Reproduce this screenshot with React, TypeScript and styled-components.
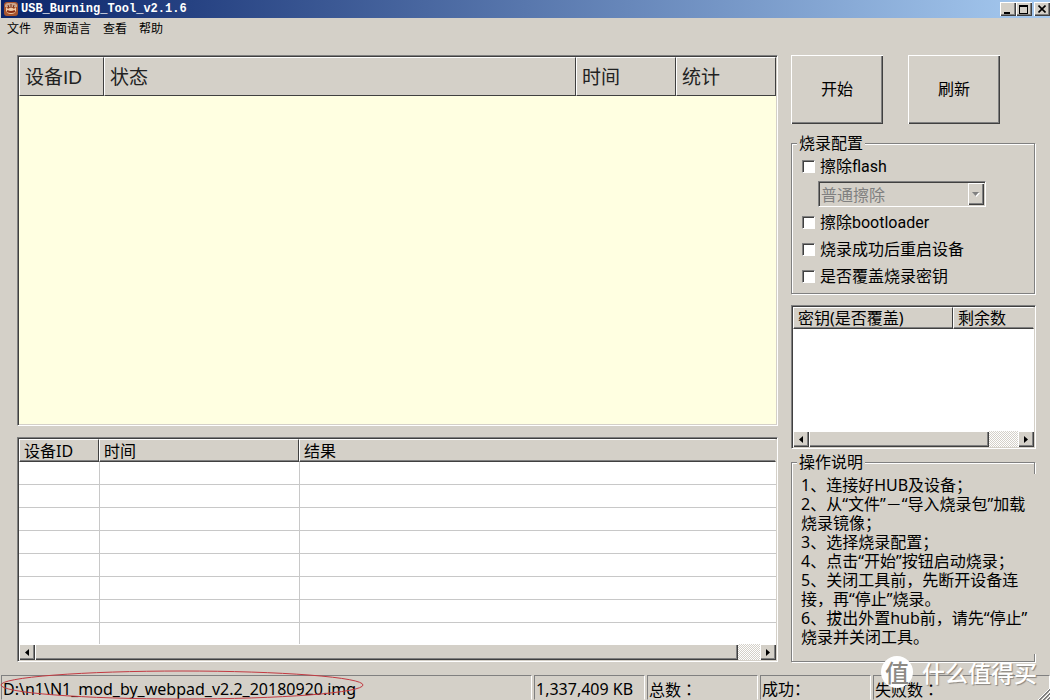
import React from "react";
import styled, { createGlobalStyle } from "styled-components";

const face = "#d4d0c8";
const shade = "#808080";
const dark = "#404040";
const raised = `inset 1px 1px 0 #fff, inset -1px -1px 0 ${dark}, inset -2px -2px 0 ${shade}`;
const uiFont = `"Noto Sans", "Noto Sans CJK SC", sans-serif`;

const GlobalStyle = createGlobalStyle`
  *, *::before, *::after { box-sizing: border-box; }
  body { margin: 0; background: ${face}; }
  button, select, input { font: inherit; color: inherit; margin: 0; }
`;

const Window = styled.div`
  position: relative;
  display: flex;
  flex-direction: column;
  min-height: 100vh;
  overflow: hidden;
  background: ${face};
  color: #000;
  font: 16px/19px ${uiFont};
`;

const TitleBar = styled.header`
  display: flex;
  align-items: center;
  height: 18px;
  margin-left: 1px;
  padding-left: 3px;
  background: linear-gradient(to right, #0a246a, #a6caf0);
`;

const Title = styled.h1`
  flex: 1;
  margin: 0 0 0 3px;
  color: #fff;
  font: bold 12px/18px "Liberation Mono", monospace;
`;

const CaptionButtons = styled.div`
  display: flex;
`;

const CaptionButton = styled.button<{ $apart?: boolean }>`
  display: grid;
  place-items: center;
  width: 16px;
  height: 14px;
  margin-left: ${(p) => (p.$apart ? 2 : 0)}px;
  padding: 0;
  border: 0;
  background: ${face};
  box-shadow: ${raised};
`;

const MenuBar = styled.nav`
  display: flex;
  height: 20px;
  padding-left: 1px;
`;

const MenuItem = styled.button`
  padding: 0 6px;
  border: 0;
  background: none;
  font: 12px/20px "Noto Sans CJK SC", sans-serif;
`;

const Main = styled.main`
  flex: 1;
  display: grid;
  grid-template-columns: minmax(0, 1fr) 245px;
  gap: 13px;
  padding: 17px 14px 11px 17px;
`;

const Column = styled.div`
  display: flex;
  flex-direction: column;
  min-width: 0;
`;

const ListBox = styled.section<{ $fill?: boolean; $top?: number }>`
  display: flex;
  flex-direction: column;
  flex: ${(p) => (p.$fill ? "1 0 auto" : "none")};
  margin-top: ${(p) => p.$top ?? 0}px;
  padding: 1px;
  border: 1px solid;
  border-color: ${shade} #fff #fff ${shade};
  box-shadow: inset 1px 1px 0 ${dark};
  background: ${face};
`;

const ListView = styled.div<{ $tone: string; $height?: number }>`
  flex: ${(p) => (p.$height ? `0 0 ${p.$height}px` : "1 0 240px")};
  overflow: hidden;
  background: ${(p) => p.$tone};
`;

const Table = styled.table`
  width: 100%;
  table-layout: fixed;
  border-collapse: separate;
  border-spacing: 0;
`;

const Col = styled.col<{ $w?: number }>`
  width: ${(p) => (p.$w ? `${p.$w}px` : "auto")};
`;

const HeadCell = styled.th<{ $large?: boolean; $open?: boolean; $short?: boolean }>`
  height: ${(p) => (p.$large ? 39 : p.$short ? 22 : 23)}px;
  padding: ${(p) => (p.$large ? "2px 0 0 5px" : "0 0 0 4px")};
  border: 1px solid;
  border-color: #fff ${(p) => (p.$open ? face : dark)} ${dark} #fff;
  background: ${face};
  box-shadow: ${(p) => (p.$large ? "none" : `inset 0 -1px 0 ${shade}`)};
  text-align: left;
  white-space: nowrap;
  font: ${(p) =>
    p.$large ? `19px/30px "Liberation Sans", "Noto Sans CJK SC", sans-serif` : `16px/20px ${uiFont}`};
  color: ${(p) => (p.$large ? "#222" : "#000")};
`;

const Cell = styled.td`
  height: 23px;
  padding: 0;
  border-bottom: 1px solid #c8c8c8;
  & + & {
    border-left: 1px solid #c8c8c8;
  }
`;

const ScrollBar = styled.div`
  display: flex;
  height: 16px;
  background: repeating-conic-gradient(#fff 0 25%, ${face} 0 50%) 0 0 / 2px 2px;
`;

const ScrollButton = styled.button`
  display: grid;
  place-items: center;
  width: 16px;
  height: 16px;
  padding: 0;
  border: 0;
  background: ${face};
  box-shadow: ${raised};
`;

const Thumb = styled.div<{ $share: number }>`
  flex: ${(p) => p.$share} 0 0;
  background: ${face};
  box-shadow: ${raised};
`;

const TrackRest = styled.div<{ $share: number }>`
  flex: ${(p) => p.$share} 0 0;
`;

const Actions = styled.div`
  display: flex;
  gap: 25px;
`;

const ActionButton = styled.button`
  width: 92px;
  height: 69px;
  padding: 0;
  border: 0;
  background: ${face};
  box-shadow: ${raised};
`;

const Group = styled.fieldset<{ $top: number; $fill?: boolean }>`
  flex: ${(p) => (p.$fill ? "1 0 auto" : "none")};
  min-width: 0;
  margin: ${(p) => p.$top}px 1px 0 0;
  padding: 0 0 3px 9px;
  border: 1px solid ${shade};
  box-shadow: 1px 1px 0 #fff, inset 1px 1px 0 #fff;
`;

const Legend = styled.legend`
  margin-left: -4px;
  padding: 0 2px;
  background: ${face};
  line-height: 18px;
`;

const Options = styled.div`
  padding-top: 1px;
`;

const Option = styled.label`
  display: flex;
  align-items: center;
  gap: 5px;
  height: 27px;
  padding-left: 1px;
  font-family: Roboto, "Noto Sans CJK SC", sans-serif;
`;

const Tick = styled.input`
  appearance: none;
  width: 13px;
  height: 13px;
  border: 1px solid;
  border-color: ${shade} #fff #fff ${shade};
  background: #fff;
  box-shadow: inset 1px 1px 0 ${dark};
  &:checked {
    background: ${dark};
  }
`;

const Drop = styled.div`
  position: relative;
  width: 168px;
  height: 26px;
  margin: 1px 0 2px 17px;
`;

const Select = styled.select`
  appearance: none;
  width: 100%;
  height: 100%;
  padding: 2px 18px 0 2px;
  border: 1px solid;
  border-color: ${shade} #fff #fff ${shade};
  border-radius: 0;
  background: ${face};
  box-shadow: inset 1px 1px 0 ${dark};
  opacity: 1;
  &:disabled {
    color: ${shade};
  }
`;

const DropArrow = styled.span`
  position: absolute;
  top: 2px;
  right: 2px;
  bottom: 2px;
  display: grid;
  place-items: center;
  width: 16px;
  background: ${face};
  box-shadow: ${raised};
  pointer-events: none;
`;

const Steps = styled.ol`
  min-height: 180px;
  margin: 3px -2px 2px 0;
  padding: 2px 3px 0 0;
  list-style: none;
  background: ${face};
`;

const StatusBar = styled.footer`
  display: flex;
  gap: 2px;
  height: 27px;
  padding: 2px 0 0 1px;
`;

const Pane = styled.div<{ $w?: number; $grow?: boolean; $wide?: boolean }>`
  position: relative;
  flex: ${(p) => (p.$grow ? "1 1 0" : "none")};
  width: ${(p) => (p.$w ? `${p.$w}px` : "auto")};
  padding-left: 1px;
  border: 1px solid;
  border-color: ${shade} #fff transparent ${shade};
  font-family: ${(p) => (p.$wide ? `"Noto Sans CJK TC", sans-serif` : uiFont)};
  line-height: 26px;
  white-space: nowrap;
`;

const RedRing = styled.svg`
  position: absolute;
  top: -7px;
  left: -2px;
  overflow: visible;
`;

const Grip = styled.svg`
  position: absolute;
  right: 0;
  bottom: 0;
`;

const Watermark = styled.div`
  position: absolute;
  right: 13px;
  bottom: 12px;
  display: flex;
  align-items: center;
  gap: 9px;
  color: #fff;
  font: 500 23px/32px "Noto Sans CJK SC", sans-serif;
  text-shadow: 1px 1px 1px #8a8680;
  pointer-events: none;
`;

const Seal = styled.span`
  width: 32px;
  height: 32px;
  border-radius: 50%;
  background: #fff;
  color: #8c8984;
  font-size: 24px;
  line-height: 32px;
  text-align: center;
  text-shadow: none;
`;

const steps = [
  "1、连接好HUB及设备；",
  "2、从“文件”－“导入烧录包”加载烧录镜像；",
  "3、选择烧录配置；",
  "4、点击“开始”按钮启动烧录；",
  "5、关闭工具前，先断开设备连接，再“停止”烧录。",
  // A closing quote sticks to the next character, so allow a break after it.
  "6、拔出外置hub前，请先“停止”\u200b烧录并关闭工具。",
];

function AppIcon() {
  return (
    <svg width="14" height="14" viewBox="0 0 14 14" aria-hidden="true">
      <rect width="14" height="14" rx="3" fill="#a8552e" />
      <path d="M1 3Q2 1 4 1H10Q12 1 13 3V5H1Z" fill="#c9a48c" />
      <path d="M2 5L4 7L7 5L10 7L12 5V9Q11 12 7 12Q3 12 2 9Z" fill="#f0c9a4" />
      <path d="M4 3L5 6M7 2V6M10 3L9 6" stroke="#7a2f16" />
      <path d="M3 9Q7 11 11 9" stroke="#8a2c10" strokeWidth="2" fill="none" />
    </svg>
  );
}

function HScroll({ thumb, rest }: { thumb: number; rest: number }) {
  return (
    <ScrollBar>
      <ScrollButton aria-label="向左滚动">
        <svg width="4" height="7" viewBox="0 0 4 7"><path d="M4 0V7L0 3.5Z" /></svg>
      </ScrollButton>
      <Thumb $share={thumb} />
      <TrackRest $share={rest} />
      <ScrollButton aria-label="向右滚动">
        <svg width="4" height="7" viewBox="0 0 4 7"><path d="M0 0V7L4 3.5Z" /></svg>
      </ScrollButton>
    </ScrollBar>
  );
}

function CheckOption({ label }: { label: string }) {
  return (
    <Option>
      <Tick type="checkbox" />
      {label}
    </Option>
  );
}

export default function App() {
  return (
    <Window>
      <GlobalStyle />
      <TitleBar>
        <AppIcon />
        <Title>USB_Burning_Tool_v2.1.6</Title>
        <CaptionButtons>
          <CaptionButton aria-label="最小化">
            <svg width="10" height="9" viewBox="0 0 10 9"><path d="M1 7H7V9H1Z" /></svg>
          </CaptionButton>
          <CaptionButton aria-label="最大化">
            <svg width="10" height="9" viewBox="0 0 10 9"><path d="M0 0H9V9H0ZM1 2V8H8V2Z" fillRule="evenodd" /></svg>
          </CaptionButton>
          <CaptionButton aria-label="关闭" $apart>
            <svg width="8" height="8" viewBox="0 0 8 8"><path d="M0.5 0.5L7.5 7.5M7.5 0.5L0.5 7.5" stroke="#000" strokeWidth="1.6" /></svg>
          </CaptionButton>
        </CaptionButtons>
      </TitleBar>
      <MenuBar>
        {["文件", "界面语言", "查看", "帮助"].map((m) => (
          <MenuItem key={m}>{m}</MenuItem>
        ))}
      </MenuBar>
      <Main>
        <Column>
          <ListBox $fill>
            <ListView $tone="#ffffe1">
              <Table>
                <colgroup>
                  <Col $w={85} />
                  <Col />
                  <Col $w={100} />
                  <Col $w={100} />
                </colgroup>
                <thead>
                  <tr>
                    {["设备ID", "状态", "时间", "统计"].map((h) => (
                      <HeadCell key={h} $large>{h}</HeadCell>
                    ))}
                  </tr>
                </thead>
              </Table>
            </ListView>
          </ListBox>
          <ListBox $top={11}>
            <ListView $tone="#fff" $height={205}>
              <Table>
                <colgroup>
                  <Col $w={80} />
                  <Col $w={200} />
                  <Col />
                </colgroup>
                <thead>
                  <tr>
                    <HeadCell>设备ID</HeadCell>
                    <HeadCell>时间</HeadCell>
                    <HeadCell $open>结果</HeadCell>
                  </tr>
                </thead>
                <tbody>
                  {Array.from({ length: 8 }, (_, i) => (
                    <tr key={i}>
                      <Cell />
                      <Cell />
                      <Cell />
                    </tr>
                  ))}
                </tbody>
              </Table>
            </ListView>
            <HScroll thumb={703} rest={22} />
          </ListBox>
        </Column>
        <Column>
          <Actions>
            <ActionButton>开始</ActionButton>
            <ActionButton>刷新</ActionButton>
          </Actions>
          <Group $top={10}>
            <Legend>烧录配置</Legend>
            <Options>
              <CheckOption label="擦除flash" />
              <Drop>
                <Select disabled aria-label="擦除方式">
                  <option>普通擦除</option>
                </Select>
                <DropArrow>
                  <svg width="8" height="5" viewBox="0 0 8 5">
                    <path d="M1 1H8L4.5 5Z" fill="#fff" />
                    <path d="M0 0H7L3.5 4Z" fill={shade} />
                  </svg>
                </DropArrow>
              </Drop>
              <CheckOption label="擦除bootloader" />
              <CheckOption label="烧录成功后重启设备" />
              <CheckOption label="是否覆盖烧录密钥" />
            </Options>
          </Group>
          <ListBox $top={11}>
            <ListView $tone="#fff" $height={124}>
              <Table>
                <colgroup>
                  <Col $w={160} />
                  <Col />
                </colgroup>
                <thead>
                  <tr>
                    <HeadCell $short>密钥(是否覆盖)</HeadCell>
                    <HeadCell $short $open>剩余数</HeadCell>
                  </tr>
                </thead>
              </Table>
            </ListView>
            <HScroll thumb={180} rest={29} />
          </ListBox>
          <Group $top={4} $fill>
            <Legend>操作说明</Legend>
            <Steps>
              {steps.map((s) => (
                <li key={s}>{s}</li>
              ))}
            </Steps>
          </Group>
        </Column>
      </Main>
      <StatusBar>
        <Pane $grow>
          D:\n1\N1_mod_by_webpad_v2.2_20180920.img
          <RedRing width="366" height="32" viewBox="0 0 366 32" aria-hidden="true">
            <ellipse cx="182" cy="16" rx="181" ry="14" fill="none" stroke="#c23a42" />
          </RedRing>
        </Pane>
        <Pane $w={111}>1,337,409 KB</Pane>
        <Pane $w={111} $wide>总数：</Pane>
        <Pane $w={111}>成功：</Pane>
        <Pane $w={177} $wide>失败数：</Pane>
      </StatusBar>
      <Grip width="12" height="12" viewBox="0 0 12 12" aria-hidden="true">
        <path d="M0 12L12 0M4 12L12 4M8 12L12 8" stroke="#fff" />
        <path d="M1 12L12 1M2 12L12 2M5 12L12 5M6 12L12 6M9 12L12 9M10 12L12 10" stroke={shade} />
      </Grip>
      <Watermark>
        <Seal>值</Seal>
        什么值得买
      </Watermark>
    </Window>
  );
}
